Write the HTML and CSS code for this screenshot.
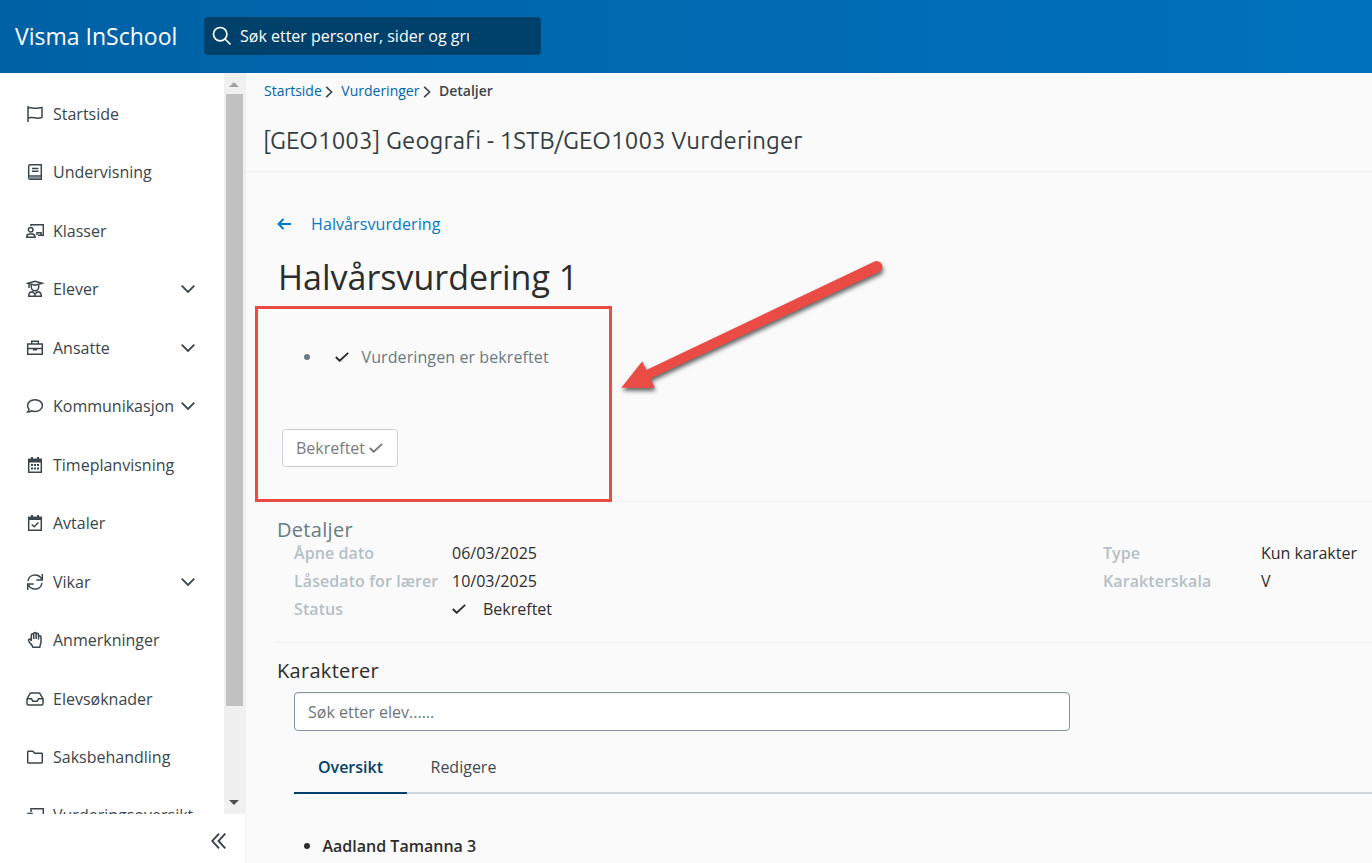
FILE: index.html
```html
<!DOCTYPE html>
<html lang="no">
<head>
  <meta charset="UTF-8">
  <meta name="viewport" content="width=device-width, initial-scale=1.0">
  <title>Visma InSchool</title>
  <link rel="stylesheet" href="styles.css">
</head>
<body>
  <header class="topbar">
    <div class="brand">Visma InSchool</div>
    <div class="search">
      <svg class="search-icon" viewBox="0 0 20 20"><circle cx="8.2" cy="8.2" r="6.7"/><path d="M13 13l5.5 5.5"/></svg>
      <span class="search-text">Søk etter personer, sider og grupper</span>
    </div>
  </header>

  <div class="layout">
    <aside class="sidebar">
      <div class="scroll-area">
        <nav class="menu">
          <a class="item"><svg class="icon" viewBox="0 0 18 18"><path d="M2 1v16M2 3c2.500-1 4 0 6.500.3S13 3 16 2.500v10c-3 .8-5 .9-7.500.3S4.500 12 2 13"/></svg><span>Startside</span></a>
          <a class="item"><svg class="icon" viewBox="0 0 18 18"><path d="M16 1.700H4.300Q2.700 1.700 2.700 3.300V14.700Q2.700 16.300 4.300 16.300H16M15.300 1.700V16.300M2.900 13H15.300M6 5.500h6.500M6 8.300h6.500"/><path class="soft" d="M4 15h11"/></svg><span>Undervisning</span></a>
          <a class="item"><svg class="icon" viewBox="0 0 18 18"><circle cx="4.700" cy="7.700" r="2.300"/><path d="M.7 15.300q0-3.300 2.800-3.300h2.800q2.700 0 2.700 3.300zM5 4V2.700h12.300v10.600H12M11 13v-2.300h4V13"/></svg><span>Klasser</span></a>
          <a class="item"><svg class="icon" viewBox="0 0 18 18"><path d="M2 3.300l7-2 7 2-7 2zM3 4v4M5.300 4.500v2.500a3.700 3.700 0 0 0 7.400 0V4.500M2.700 16.300c0-3 1.500-4.500 3.800-4.500L9 14l2.500-2.200c2.300 0 3.800 1.500 3.800 4.500zM9 14v2"/></svg><span>Elever</span><svg class="chevron" viewBox="0 0 14 8"><path d="M.7.7L7 7 13.300.7"/></svg></a>
          <a class="item"><svg class="icon" viewBox="0 0 18 18"><path d="M1.700 5h14.600v10.300H1.700zM5.700 5V2.200h6.600V5M1.700 9.500h14.600"/><path class="fill" d="M7 9h4v2.500H7z"/></svg><span>Ansatte</span><svg class="chevron" viewBox="0 0 14 8"><path d="M.7.7L7 7 13.300.7"/></svg></a>
          <a class="item"><svg class="icon" viewBox="0 0 18 18"><path d="M9 2.700c4.300 0 7.400 2.600 7.400 5.900s-3.100 5.900-7.400 5.900c-1.300 0-2.500-.2-3.600-.7-1.100.8-2.300 1.300-3.800 1.300.8-.9 1.300-1.800 1.400-2.900C2.100 11.200 1.600 10 1.600 8.600c0-3.300 3.100-5.900 7.400-5.900z"/></svg><span>Kommunikasjon</span><svg class="chevron" viewBox="0 0 14 8"><path d="M.7.7L7 7 13.300.7"/></svg></a>
          <a class="item"><svg class="icon" viewBox="0 0 18 18"><path d="M2.700 3.500h12.600v12.800H2.700z"/><path class="fill" d="M2 2.700h14v3.800H2zM5 1h2v3H5zM11 1h2v3h-2zM5 8h2v2H5zM8 8h2v2H8zM11 8h2v2h-2zM5 11.500h2v2H5zM8 11.500h2v2H8zM11 11.500h2v2h-2z"/></svg><span>Timeplanvisning</span></a>
          <a class="item"><svg class="icon" viewBox="0 0 18 18"><path d="M2.700 3.500h12.600v12.800H2.700zM5.700 10.500l2.500 2.300L12.500 8.500"/><path class="fill" d="M2 2.700h14v3.300H2zM5 1h2v3H5zM11 1h2v3h-2z"/></svg><span>Avtaler</span></a>
          <a class="item"><svg class="icon" viewBox="0 0 18 18"><path d="M2 8C2.500 4.500 5.500 2 9 2c3 0 5.300 1.500 6.500 4M16.300 1v6h-6M16 10c-.5 3.500-3.500 6-7 6-3 0-5.300-1.500-6.500-4M1.700 17v-6h6"/></svg><span>Vikar</span><svg class="chevron" viewBox="0 0 14 8"><path d="M.7.7L7 7 13.300.7"/></svg></a>
          <a class="item"><svg class="icon" viewBox="0 0 18 18"><path d="M5.300 10V4a1.200 1.200 0 0 1 2.400 0v4V2.700a1.200 1.200 0 0 1 2.400 0V8 3.500a1.200 1.200 0 0 1 2.400 0V8.500 6a1.200 1.200 0 0 1 2.500 0v5c0 2-1 2.500-1.200 5.300H7C6.500 13.500 3.500 12.500 2.500 9.500c-.3-1.500 1-2 2-1l.8 1.500"/></svg><span>Anmerkninger</span></a>
          <a class="item"><svg class="icon" viewBox="0 0 18 18"><path d="M1 9l3-5.300q.3-.7 1-.7h8q.7 0 1 .7L17 9v4.500q0 1.500-1.500 1.500h-13Q1 15 1 13.500zM1.500 8.700h4l1.300 2.600h4.400l1.300-2.600h4"/></svg><span>Elevsøknader</span></a>
          <a class="item"><svg class="icon" viewBox="0 0 18 18"><path d="M1.700 4q0-.7.700-.7h4.400l2 2h6.800q.7 0 .7.700v8.300q0 .7-.7.700H2.400q-.7 0-.7-.7z"/></svg><span>Saksbehandling</span></a>
          <a class="item"><svg class="icon" viewBox="0 0 18 18"><path d="M5 6V2.700h12.300v10.600H12M2 7.500h4v5H2z"/></svg><span>Vurderingsoversikt</span></a>
        </nav>
        <div class="scrollbar">
          <span class="arrow up"></span>
          <span class="thumb"></span>
          <span class="arrow down"></span>
        </div>
      </div>
      <div class="collapse">
        <svg viewBox="0 0 16 16"><path d="M8 .7L1.200 8 8 15.300M14.300.7L7.500 8l6.800 7.300"/></svg>
      </div>
    </aside>

    <main class="content">
      <div class="page-head">
        <div class="breadcrumb">
          <a>Startside</a>
          <svg viewBox="0 0 8 12"><path d="M1.200.8L6.600 6l-5.400 5.200"/></svg>
          <a>Vurderinger</a>
          <svg viewBox="0 0 8 12"><path d="M1.200.8L6.600 6l-5.400 5.200"/></svg>
          <span class="current">Detaljer</span>
        </div>
        <div class="page-title">[GEO1003] Geografi - 1STB/GEO1003 Vurderinger</div>
      </div>

      <section class="summary">
        <a class="back">
          <svg viewBox="0 0 14 12"><path d="M14 6H1.500M6.500 1l-5 5 5 5"/></svg>
          <span>Halvårsvurdering</span>
        </a>
        <h1>Halvårsvurdering 1</h1>
        <ul class="status-list">
          <li><svg class="check" viewBox="0 0 14 10"><path d="M.8 5l3.900 3.800L13.200.9"/></svg>Vurderingen er bekreftet</li>
        </ul>
        <button class="confirmed" disabled>Bekreftet <svg class="check" viewBox="0 0 14 10"><path d="M.8 5l3.900 3.800L13.200.9"/></svg></button>

        <!-- highlight around the confirmed status -->
        <div class="highlight"></div>
        <svg class="pointer" viewBox="0 0 280 150">
          <path d="M6.300 137.700L27.300 111.300 31.300 120 259.500 11.500a5.700 5.700 0 0 1 5 10.200L35.700 128.500 39.700 138z"/>
        </svg>
      </section>

      <section class="details">
        <h2>Detaljer</h2>
        <div class="columns">
          <dl>
            <dt>Åpne dato</dt><dd>06/03/2025</dd>
            <dt>Låsedato for lærer</dt><dd>10/03/2025</dd>
            <dt>Status</dt><dd><svg class="check" viewBox="0 0 14 10"><path d="M.8 5l3.900 3.800L13.200.9"/></svg>Bekreftet</dd>
          </dl>
          <dl>
            <dt>Type</dt><dd>Kun karakter</dd>
            <dt>Karakterskala</dt><dd>V</dd>
          </dl>
        </div>
      </section>

      <section class="grades">
        <h2>Karakterer</h2>
        <input class="student-search" type="text" placeholder="Søk etter elev......">
        <div class="tabs">
          <a class="tab active">Oversikt</a>
          <a class="tab">Redigere</a>
        </div>
        <ul class="students">
          <li>Aadland Tamanna 3</li>
        </ul>
      </section>
    </main>
  </div>
</body>
</html>
```
FILE: styles.css
```css
* {
  box-sizing: border-box;
}

body {
  margin: 0;
  height: 100vh;
  overflow: hidden;
  font-family: 'Open Sans', 'Noto Sans', sans-serif;
  font-size: 16px;
  line-height: 24px;
  color: #2d2d2d;
  background: #fafafa;
}

svg {
  display: block;
  flex: none;
  fill: none;
  stroke: currentColor;
}

h1, h2, ul, dl, dd {
  margin: 0;
  padding: 0;
  font-weight: 400;
}

/* Top bar */
.topbar {
  display: flex;
  align-items: center;
  height: 73px;
  padding: 0 0 1px 15px;
  background: linear-gradient(to right, #0061a5, #0072bd);
  color: #fff;
}

.brand {
  width: 189px;
  font-size: 23px;
  white-space: nowrap;
}

.search {
  display: flex;
  align-items: center;
  width: 337px;
  height: 38px;
  padding-left: 8px;
  border-radius: 4px;
  background: #00416b;
}

.search-icon {
  width: 20px;
  height: 20px;
  margin-right: 8px;
  stroke-width: 1.7;
}

.search-text {
  width: 229px;
  overflow: hidden;
  white-space: nowrap;
}

.layout {
  display: flex;
  height: calc(100vh - 73px);
}

/* Sidebar */
.sidebar {
  flex: none;
  width: 246px;
  border-right: 1px solid #f0f0f0;
  background: #fff;
  color: #3a454c;
}

.scroll-area {
  display: flex;
  height: 741px;
  overflow: hidden;
}

.menu {
  width: 224px;
  padding-top: 11.6px;
}

.item {
  display: flex;
  align-items: center;
  height: 58.47px;
  padding: 0 29px 0 26px;
}

.icon {
  width: 18px;
  height: 18px;
  margin-right: 9px;
  stroke-width: 1.5;
}

.icon .fill {
  fill: currentColor;
  stroke: none;
}

.icon .soft {
  stroke: #6b757b;
}

.chevron {
  width: 14px;
  height: 8px;
  margin-left: auto;
  stroke-width: 1.8;
}

.scrollbar {
  display: flex;
  flex-direction: column;
  align-items: center;
  width: 21px;
  height: 741px;
  padding-right: 1px;
  background: #f0f0f0;
}

.thumb {
  width: 17px;
  height: 612px;
  margin-top: 7px;
  background: #c1c1c1;
}

.arrow {
  border-left: 5px solid transparent;
  border-right: 5px solid transparent;
}

.arrow.up {
  margin-top: 9px;
  border-bottom: 5px solid #a3a3a3;
}

.arrow.down {
  margin-top: auto;
  margin-bottom: 9px;
  border-top: 5px solid #505050;
}

.collapse {
  display: flex;
  justify-content: flex-end;
  padding: 19px 18.500px 0 0;
}

.collapse svg {
  width: 16px;
  height: 16px;
  stroke-width: 1.9;
}

/* Main content */
.content {
  flex: 1;
  min-width: 0;
}

.page-head {
  height: 99px;
  padding: 8px 0 0 18px;
  border-bottom: 1px solid #eee;
}

.breadcrumb {
  display: flex;
  align-items: center;
  height: 20px;
  font-size: 14px;
  line-height: 20px;
  color: #3a454c;
}

.breadcrumb a {
  color: #0066a8;
}

.breadcrumb svg {
  width: 8px;
  height: 12px;
  margin: 2px 8px 0 3.500px;
  stroke-width: 1.6;
}

.current {
  font-weight: 600;
}

.page-title {
  margin: 23px 0 0 -1px;
  font-family: Ubuntu, 'Noto Sans', sans-serif;
  font-size: 24px;
  line-height: 34px;
  letter-spacing: 0.13px;
  color: #333e44;
  white-space: nowrap;
}

.summary {
  position: relative;
  height: 330px;
  margin-left: 31px;
  padding-top: 40px;
  border-bottom: 1px solid #eee;
}

.back {
  display: flex;
  align-items: center;
  letter-spacing: 0.1px;
  color: #007ac9;
}

.back svg {
  width: 14px;
  height: 12px;
  margin-right: 20px;
  stroke-width: 2;
}

h1 {
  margin: 17px 0 0 1px;
  font-size: 34px;
  line-height: 48px;
}

.status-list {
  margin: 44px 0 0 27px;
  list-style: none;
  letter-spacing: 0.1px;
  color: #677b85;
}

.status-list li {
  display: flex;
  align-items: center;
}

.status-list li::before {
  content: '';
  width: 6px;
  height: 6px;
  margin-right: 25px;
  border-radius: 50%;
  background: currentColor;
}

.check {
  width: 14px;
  height: 10px;
  stroke-width: 1.9;
}

.status-list .check {
  margin-right: 12.5px;
  color: #2d2d2d;
}

.confirmed {
  display: flex;
  align-items: center;
  gap: 4px;
  width: 116px;
  height: 38px;
  margin: 60px 0 0 5px;
  padding: 0 13px;
  border: 1px solid #cad0d5;
  border-radius: 4px;
  background: #fff;
  font: inherit;
  color: #7b7b7b;
}

.highlight {
  position: absolute;
  left: -22px;
  top: 134px;
  width: 357px;
  height: 196px;
  border: 3px solid #ea4b45;
}

.pointer {
  position: absolute;
  left: 338px;
  top: 78px;
  width: 280px;
  height: 150px;
  fill: #ea4b45;
  stroke: none;
  filter: drop-shadow(1px 3px 2px rgba(0, 0, 0, 0.6));
}

h2 {
  font-size: 20px;
  letter-spacing: 0.3px;
}

.details {
  height: 141px;
  margin-left: 31px;
  padding-top: 17px;
  border-bottom: 1px solid #eee;
}

.details h2 {
  height: 20px;
  line-height: 22px;
  color: #677b85;
}

.columns {
  display: grid;
  grid-template-columns: 809px 1fr;
  padding-left: 17px;
}

dl {
  display: grid;
  grid-template-columns: 158px 1fr;
  grid-auto-rows: 28px;
  align-content: start;
  line-height: 28px;
  white-space: nowrap;
}

dt {
  font-weight: 600;
  letter-spacing: 0.08px;
  color: #b5bfc6;
}

dd {
  display: flex;
  align-items: center;
}

dd .check {
  margin-right: 17px;
}

.grades {
  padding: 16px 0 0 31px;
}

.student-search {
  display: block;
  width: 776px;
  height: 39px;
  margin: 9px 0 0 17px;
  padding: 0 13px;
  border: 1px solid #8494a0;
  border-radius: 4px;
  background: #fff;
  box-shadow: inset 0 1px 1px #eee;
  font: inherit;
}

.student-search::placeholder {
  color: #6b777d;
}

.tabs {
  display: flex;
  height: 63px;
  margin-left: 17px;
  border-bottom: 2px solid #cfd5d9;
}

.tab {
  height: 63px;
  padding: 24px 24px 0 23.5px;
  color: #3f4a51;
}

.tab.active {
  width: 113px;
  padding-left: 24px;
  border-bottom: 2px solid #00416b;
  font-weight: 600;
  color: #00416b;
}

.students {
  margin: 40px 0 0 27px;
  list-style: none;
}

.students li {
  display: flex;
  align-items: center;
  font-weight: 600;
}

.students li::before {
  content: '';
  width: 6px;
  height: 6px;
  margin-right: 12.5px;
  border-radius: 50%;
  background: currentColor;
}
```
